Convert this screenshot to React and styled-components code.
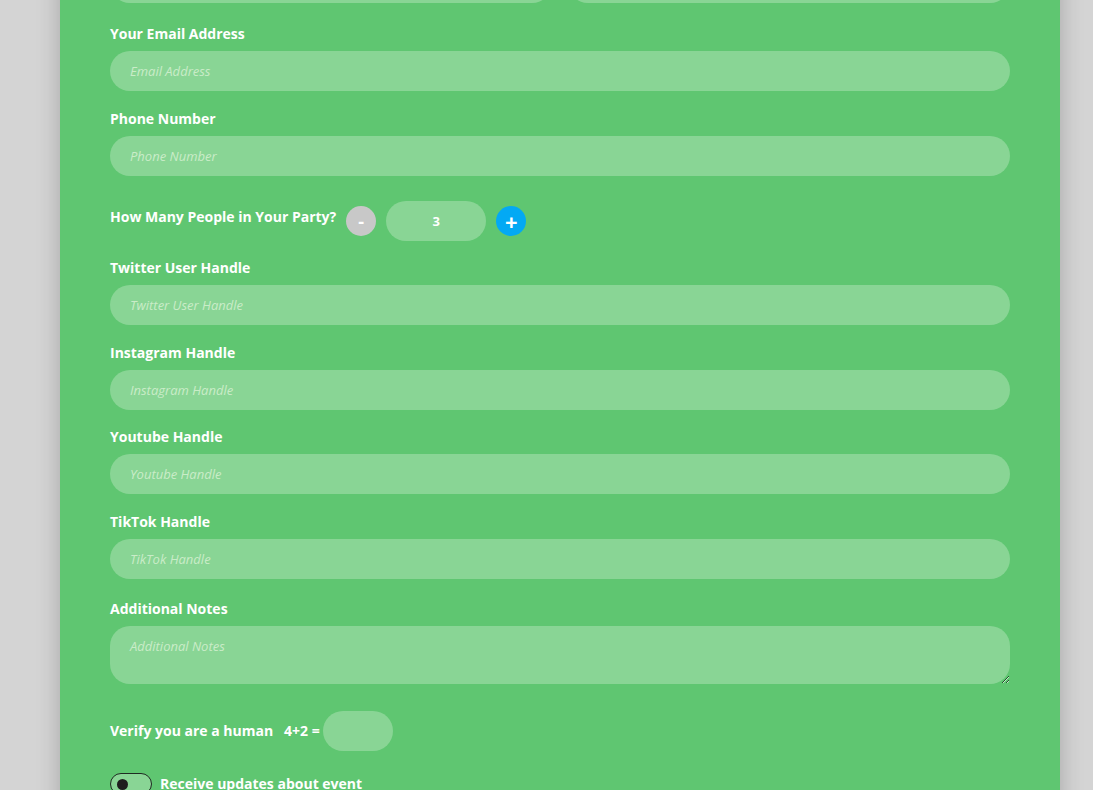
import React, { useState } from "react";
import styled, { createGlobalStyle } from "styled-components";

const Global = createGlobalStyle`
  html, body { margin: 0; padding: 0; }
  body {
    background: #d4d4d4;
    font-family: "Open Sans", "Noto Sans", sans-serif;
    overflow: hidden;
  }
`;

const Card = styled.form`
  width: 1000px;
  box-sizing: border-box;
  margin: -64px 0 0 60px;
  padding: 0 50px 40px;
  background: #5fc671;
  box-shadow: 0 0 22px rgba(0, 0, 0, 0.22);
  min-height: 900px;
`;

const Row = styled.div`
  display: grid;
  grid-template-columns: 1fr 1fr;
  gap: 16px;
`;

const Group = styled.div`
  display: flex;
  flex-direction: column;
  margin-bottom: ${(p) => p.$mb ?? 18}px;
`;

const Label = styled.label`
  color: #fff;
  font-size: 14px;
  font-weight: 700;
  line-height: 20px;
  margin-bottom: ${(p) => p.$mb ?? 7}px;
`;

const Field = styled.input`
  box-sizing: border-box;
  height: 40px;
  width: ${(p) => p.$w || "100%"};
  border: none;
  outline: none;
  border-radius: 20px;
  background: #89d595;
  padding: 0 20px;
  font-family: "Open Sans", "Noto Sans", sans-serif;
  font-size: 13px;
  color: #fff;
  text-align: ${(p) => (p.$center ? "center" : "left")};
  font-weight: ${(p) => (p.$center ? 700 : 400)};
  &::placeholder {
    color: #c9ecc8;
    font-style: italic;
  }
`;

const Notes = styled.textarea`
  box-sizing: border-box;
  height: 58px;
  width: 100%;
  border: none;
  outline: none;
  border-radius: 20px;
  background: #89d595;
  padding: 11px 20px;
  font-family: "Open Sans", "Noto Sans", sans-serif;
  font-size: 13px;
  color: #fff;
  resize: vertical;
  display: block;
  &::placeholder {
    color: #c9ecc8;
    font-style: italic;
  }
`;

const InlineRow = styled.div`
  display: flex;
  align-items: center;
  gap: ${(p) => p.$gap ?? 10}px;
  margin: ${(p) => p.$m};
`;

const InlineLabel = styled.span`
  color: #fff;
  font-size: 14px;
  font-weight: 700;
  line-height: 20px;
  padding-bottom: ${(p) => p.$pb ?? 0}px;
  white-space: pre;
`;

const RoundButton = styled.button`
  width: 30px;
  height: 30px;
  border-radius: 50%;
  border: none;
  padding: 0;
  background: ${(p) => p.$bg};
  color: #fff;
  font-family: "Open Sans", "Noto Sans", sans-serif;
  font-weight: 700;
  font-size: ${(p) => p.$fs}px;
  line-height: 30px;
  display: flex;
  align-items: center;
  justify-content: center;
  cursor: pointer;
`;

const Switch = styled.span`
  box-sizing: border-box;
  width: 42px;
  height: 22px;
  border: 1px solid #1f2a22;
  border-radius: 11px;
  background: #89d595;
  display: flex;
  align-items: center;
  padding-left: 6px;
  &::before {
    content: "";
    width: 11px;
    height: 11px;
    border-radius: 50%;
    background: #1e1e1e;
  }
`;

const socials = [
  { name: "Twitter User Handle", mb: 18 },
  { name: "Instagram Handle", mb: 17 },
  { name: "Youtube Handle", mb: 18 },
  { name: "TikTok Handle", mb: 20 },
];

export default function App() {
  const [count, setCount] = useState(3);
  return (
    <>
      <Global />
      <Card onSubmit={(e) => e.preventDefault()}>
        <Row>
          <Group $mb={21}>
            <Label>First Name</Label>
            <Field placeholder="First Name" />
          </Group>
          <Group $mb={21}>
            <Label>Last Name</Label>
            <Field placeholder="Last Name" />
          </Group>
        </Row>
        <Group>
          <Label>Your Email Address</Label>
          <Field placeholder="Email Address" />
        </Group>
        <Group>
          <Label>Phone Number</Label>
          <Field placeholder="Phone Number" />
        </Group>
        <InlineRow $m="25px 0 17px">
          <InlineLabel $pb={8}>How Many People in Your Party?</InlineLabel>
          <RoundButton
            type="button"
            $bg="#c8c8c8"
            $fs={18}
            onClick={() => setCount((c) => Math.max(1, c - 1))}
          >
            -
          </RoundButton>
          <Field
            $w="100px"
            $center
            value={count}
            onChange={(e) => setCount(e.target.value)}
          />
          <RoundButton
            type="button"
            $bg="#03a9f4"
            $fs={22}
            onClick={() => setCount((c) => Number(c) + 1)}
          >
            +
          </RoundButton>
        </InlineRow>
        {socials.map((s) => (
          <Group key={s.name} $mb={s.mb}>
            <Label>{s.name}</Label>
            <Field placeholder={s.name} />
          </Group>
        ))}
        <Group $mb={27}>
          <Label $mb={7}>Additional Notes</Label>
          <Notes placeholder="Additional Notes" />
        </Group>
        <InlineRow $gap={0} $m="0 0 22px">
          <InlineLabel>Verify you are a human   4+2 = </InlineLabel>
          <Field $w="70px" />
        </InlineRow>
        <InlineRow $gap={8}>
          <Switch />
          <InlineLabel>Receive updates about event</InlineLabel>
        </InlineRow>
      </Card>
    </>
  );
}
